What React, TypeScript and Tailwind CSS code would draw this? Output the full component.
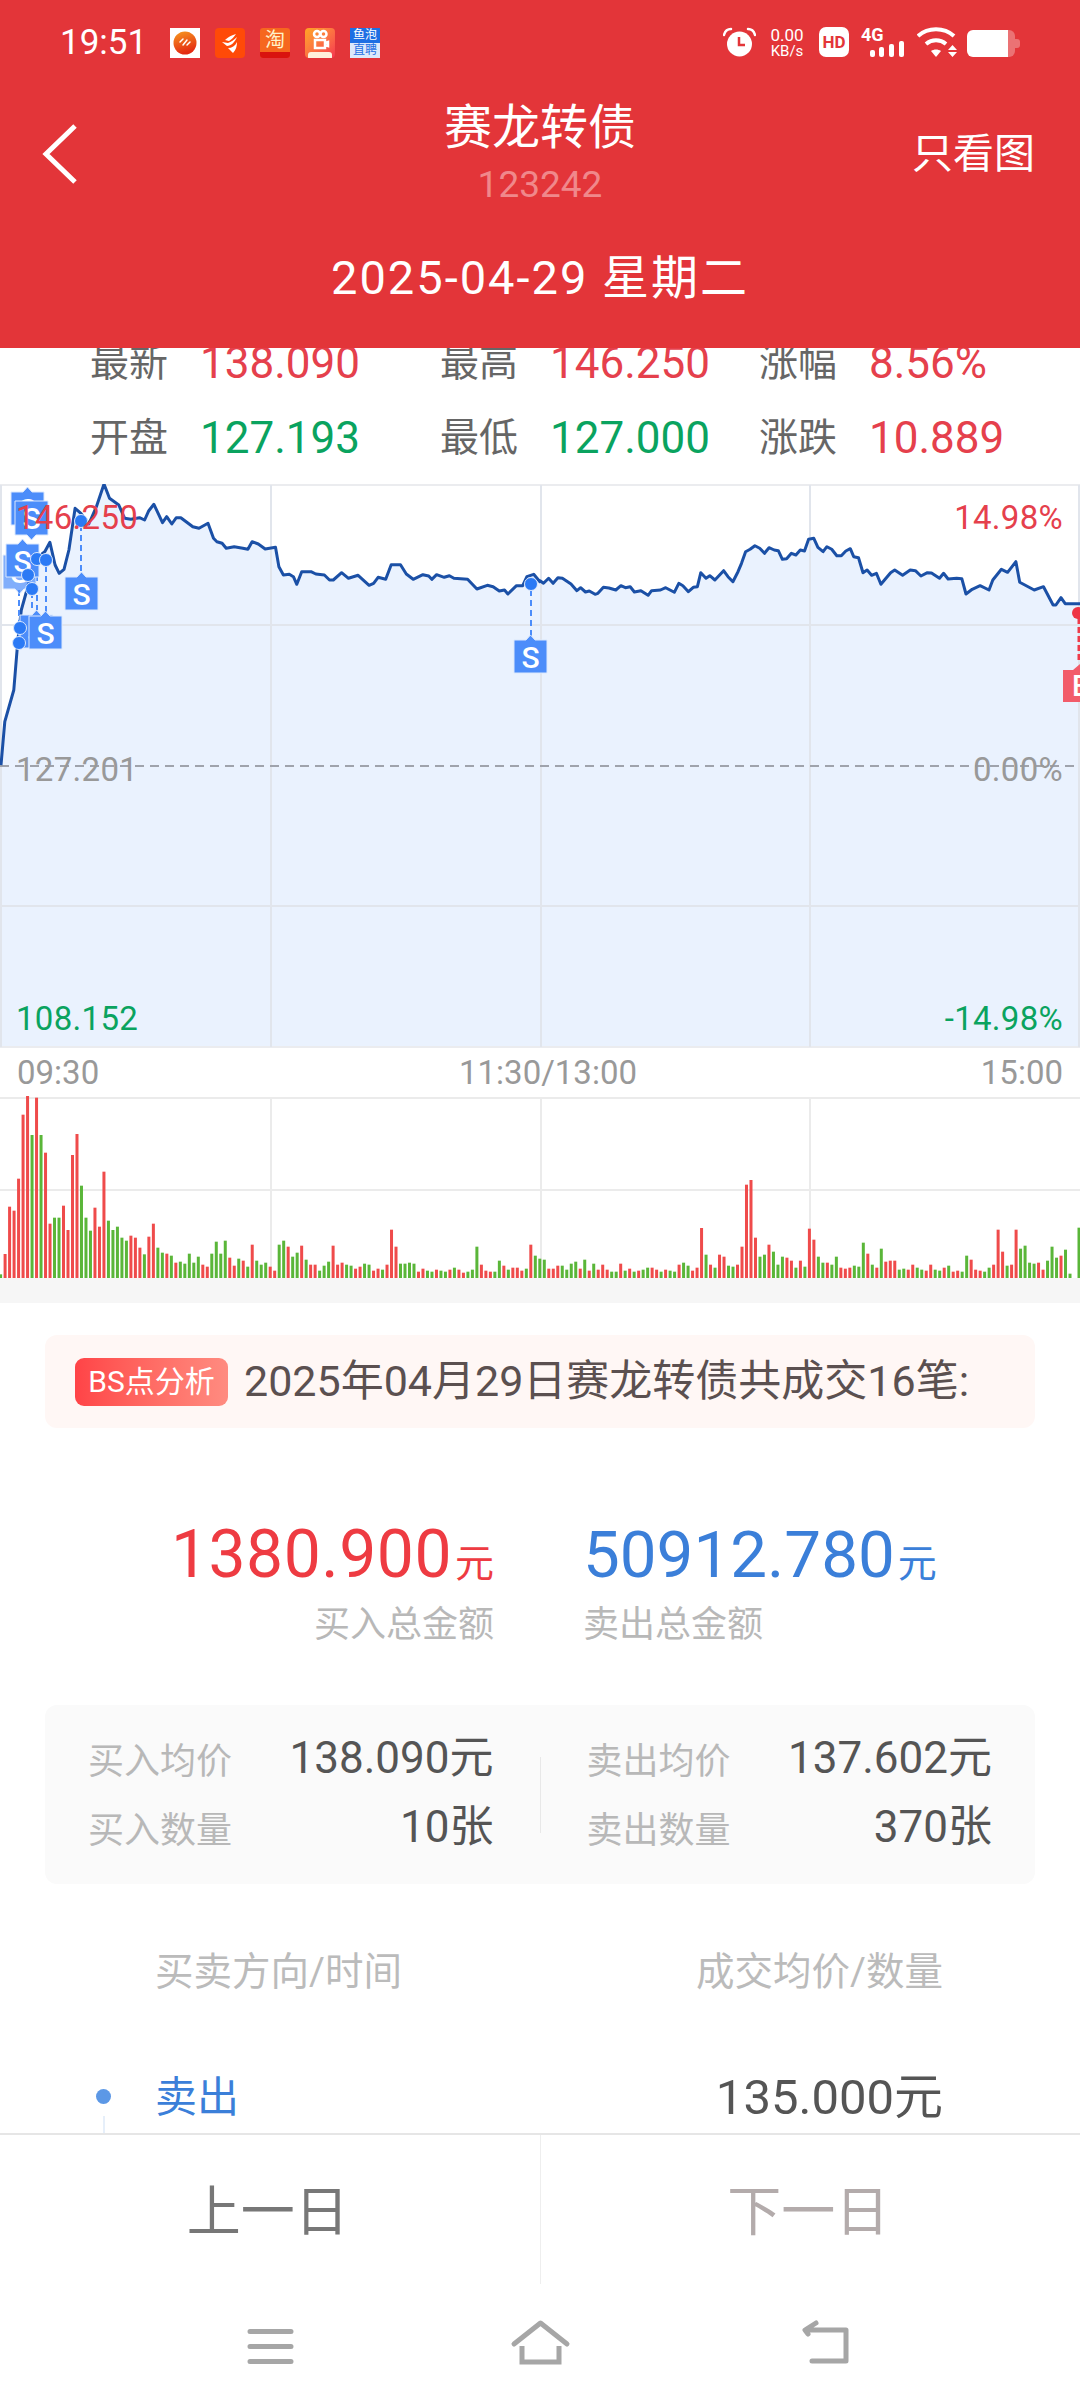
const linePts = [
  [3,885],[14,755],[40,660],[52,510],[62,420],[78,360],[100,270],[130,245],[145,217],[160,285],[172,310],[186,298],[200,240],[218,115],[235,130],[258,162],[280,110],[302,42],[318,85],[345,105],[362,145],[380,148],[405,143],[420,150],[432,122],[447,103],[472,158],[484,140],[499,162],[512,143],[525,143],[560,170],[578,175],[604,160],[620,205],[630,215],[645,220],[657,235],[680,230],[705,235],[720,238],[732,215],[750,222],[770,237],[800,232],[810,290],[823,315],[840,313],[852,320],[862,343],[876,305],[903,305],[917,312],[942,315],[957,330],[968,330],[992,308],[1012,325],[1040,316],[1072,346],[1085,340],[1098,322],[1120,328],[1136,284],[1163,284],[1180,312],[1200,328],[1228,314],[1245,318],[1254,328],[1268,314],[1290,322],[1305,317],[1318,325],[1358,328],[1385,357],[1415,346],[1432,350],[1450,363],[1465,360],[1475,372],[1500,347],[1518,347],[1530,320],[1550,313],[1568,335],
];

// second half of the price line, x measured from the middle of the page
const linePtsRight = [
  [0,332],[10,340],[25,325],[38,340],[52,323],[65,325],[90,342],[107,362],[118,353],[132,366],[143,363],[160,373],[168,370],[184,352],[200,354],[220,360],[235,347],[248,353],[262,350],[274,366],[293,362],[314,376],[324,362],[350,360],[365,353],[390,367],[403,340],[415,347],[431,365],[445,352],[457,350],[467,308],[482,325],[493,317],[508,330],[533,302],[546,320],[560,335],[575,305],[585,280],[597,245],[610,238],[624,227],[638,235],[652,250],[665,233],[680,240],[692,242],[704,268],[716,266],[730,250],[743,255],[756,240],[768,243],[780,208],[795,205],[807,232],[822,245],[833,230],[847,238],[862,257],[875,257],[888,243],[901,236],[911,260],[925,263],[938,308],[950,300],[963,316],[977,310],[990,343],[1018,308],[1030,300],[1053,316],[1075,300],[1090,302],[1106,318],[1125,308],[1137,309],[1160,325],[1172,310],[1185,327],[1210,325],[1225,326],[1237,372],[1255,358],[1278,347],[1304,360],[1315,330],[1340,298],[1358,307],[1382,275],[1393,337],[1435,360],[1462,350],[1490,405],[1498,405],[1513,383],[1525,401],[1568,401],
];

// volume bars: bar top, positive is red, negative is green, 0 is an empty slot
const bars = [
  -703,642,500,512,416,224,168,-285,173,-285,338,551,-533,-533,497,570,345,282,-437,-533,-572,503,560,395,-542,-570,-560,-593,-602,587,593,623,-643,590,551,-623,-638,641,-647,668,-665,-671,-641,-668,-650,674,680,-641,-605,-641,-602,653,677,-656,662,-680,614,-662,-674,-668,680,692,-614,-602,620,-650,-638,617,-659,674,674,-692,-677,-665,617,674,668,-674,-677,686,680,-671,-674,692,686,-689,674,569,620,-671,-671,-668,-671,695,686,-692,-695,689,-692,-695,689,-683,689,698,-695,-689,-620,674,692,695,-695,-662,677,-689,683,683,692,-686,614,-647,-656,
  -659,686,686,677,-677,-689,-671,-665,686,-659,692,-671,689,674,689,-695,-695,671,-692,686,-695,692,-689,-683,683,689,-695,689,-692,-695,674,-668,-677,692,683,564,-644,674,-683,644,650,-677,-680,674,620,434,420,593,-650,-644,614,-635,-674,-650,653,662,-683,662,-680,566,599,-650,-668,668,-674,-650,683,686,683,-677,-680,-608,641,-674,683,-626,665,662,662,-689,-686,689,674,-683,-689,692,674,-689,-692,683,-677,695,692,-695,-647,659,689,692,-695,-683,674,569,635,-677,674,569,-626,-617,-668,-671,668,689,-662,-620,-653,647,-629,-701,0,-563,
];

const toPoint = ([x, y]: number[]) => [x / 2.904, 470 + y / 3];
const pricePoints = [
  ...linePts.map(toPoint),
  ...linePtsRight.map(([x, y]) => toPoint([x + 1568.2, y])),
];
const pricePath = pricePoints.map(([x, y]) => `${x.toFixed(1)},${y.toFixed(1)}`).join(" ");

function Marker({ x, y, down, faded }: { x: number; y: number; down?: boolean; faded?: boolean }) {
  const shape = down
    ? `M${x} ${y}h33v34h-12l-4.500 5-4.500-5h-12z`
    : `M${x} ${y + 5}h12l4.500-5 4.500 5h12v33h-33z`;
  return (
    <g opacity={faded ? 0.7 : 1}>
      <path d={shape} fill="#4c8dfa" stroke="#dbe8fd" strokeWidth="1" />
      <text
        x={x + 16.5}
        y={down ? y + 28 : y + 33}
        textAnchor="middle"
        fontSize="30"
        fontWeight="500"
        fill="#fff"
      >
        S
      </text>
    </g>
  );
}

function Dot({ x, y }: { x: number; y: number }) {
  return <circle cx={x} cy={y} r="6.500" fill="#2b7af5" stroke="#dbe8fd" strokeWidth="1" />;
}

function PriceChart() {
  return (
    <div className="relative h-[564px] shrink-0">
      <svg viewBox="0 484 1080 564" className="block h-[564px] w-[1080px] overflow-hidden">
        <polygon points={`1,1047 ${pricePath} 1080,1047`} fill="#eaf2fe" />
        <g stroke="#e1e5ec" strokeWidth="2" fill="none">
          <path d="M0 485H1080M0 1047H1080" stroke="#ebecef" />
          <path d="M1 485V1047M1079 485V1047M271 485V1047M541 485V1047M810 485V1047M0 625H1080M0 906H1080" />
        </g>
        <path d="M0 766H1080" stroke="#9fa3ac" strokeWidth="2" strokeDasharray="9 6" />
        <polyline points={pricePath} fill="none" stroke="#1b50a6" strokeWidth="3" strokeLinejoin="round" />
        <g stroke="#4c8dfa" strokeWidth="2" strokeDasharray="6 4" fill="none">
          <path d="M81 525V574M46 566V612M37 565V610M32 592V612M19 590V640M531 590V636" />
        </g>
        <path d="M1079 618V662" stroke="#ef3b4a" strokeWidth="3" strokeDasharray="6 3" />
        <Marker x={11} y={487} />
        <Marker x={15} y={501} down />
        <Marker x={3} y={555} down faded />
        <Marker x={6} y={539} />
        <Marker x={20} y={610} />
        <Dot x={20} y={628} />
        <Dot x={19} y={643} />
        <Marker x={29} y={611} />
        <Dot x={37} y={559} />
        <Dot x={46} y={560} />
        <Dot x={28} y={575} />
        <Dot x={32} y={589} />
        <Marker x={65} y={572} />
        <Dot x={81} y={521} />
        <Marker x={514} y={635} />
        <Dot x={531} y={584} />
        <circle cx="1078" cy="613" r="6" fill="#ef3545" />
        <path d="M1063 670h10l7-6v38h-17z" fill="#f25c6a" />
        <text x="1072" y="696" fontSize="29" fontWeight="500" fill="#fff">
          B
        </text>
      </svg>
      <span className="absolute left-[16px] top-[15px] text-[33px] leading-[38px] tracking-[0.3px] text-[#e5404c]">146.250</span>
      <span className="absolute right-[17px] top-[15px] text-[33px] leading-[38px] tracking-[0.3px] text-[#e5404c]">14.98%</span>
      <span className="absolute left-[16px] top-[267px] text-[33px] leading-[38px] tracking-[0.3px] text-[#999]">127.201</span>
      <span className="absolute right-[17px] top-[267px] text-[33px] leading-[38px] tracking-[0.3px] text-[#999]">0.00%</span>
      <span className="absolute left-[16px] top-[516px] text-[33px] leading-[38px] tracking-[0.3px] text-[#0aa35f]">108.152</span>
      <span className="absolute right-[17px] top-[516px] text-[33px] leading-[38px] tracking-[0.3px] text-[#0aa35f]">-14.98%</span>
    </div>
  );
}

function VolumeChart() {
  const pitch = (1079 - 0.6) / (bars.length - 1);
  return (
    <svg viewBox="0 0 1080 181" className="block h-[181px] w-[1080px] shrink-0 overflow-visible">
      <path d="M0 1H1080M0 93H1080M271 1V181M541 1V181M810 1V181" stroke="#ebebeb" strokeWidth="2" fill="none" />
      {bars.map((v, i) => {
        if (v === 0) return null;
        const top = Math.abs(v) / 3 - 57;
        return (
          <rect
            key={i}
            x={0.6 + i * pitch - 1.5}
            y={top}
            width="3"
            height={181 - top}
            fill={v > 0 ? "#ef4b4b" : "#5ab639"}
          />
        );
      })}
    </svg>
  );
}

function NotifyIcons() {
  return (
    <div className="flex gap-[15px]">
      <div className="flex h-[30px] w-[30px] items-center justify-center bg-white">
        <svg width="24" height="24" viewBox="0 0 24 24">
          <defs>
            <linearGradient id="ball" x1="0" y1="0" x2="0.300" y2="1">
              <stop offset="0" stopColor="#f79a1f" />
              <stop offset="1" stopColor="#e42a12" />
            </linearGradient>
          </defs>
          <circle cx="12" cy="12" r="11.500" fill="url(#ball)" />
          <path d="M7 11l3-3M10 14l4-5M14 14l3-3" stroke="#fff" strokeWidth="1.500" strokeLinecap="round" />
        </svg>
      </div>
      <div className="flex h-[30px] w-[30px] items-center justify-center rounded-[4px] bg-[#ff4a08]">
        <svg width="24" height="24" viewBox="0 0 24 24" fill="#fff">
          <path d="M18 3c-4 1-8 3-11 6l4 1c3-2 5-4 7-7zM19 6c-3 3-6 5-9 6l-6-1 5 4c4 0 8-4 10-9zM19 11c-2 4-5 6-9 6l5 5c3-3 4-7 4-11z" />
        </svg>
      </div>
      <div className="flex h-[30px] w-[30px] flex-col overflow-hidden rounded-[3px] bg-[#f6671f]">
        <span className="flex h-[24px] items-center justify-center text-[20px] leading-none text-[#fff2c9]">淘</span>
        <span className="h-[6px] bg-[#d9130f]" />
      </div>
      <div className="flex h-[30px] w-[30px] flex-col items-center overflow-hidden rounded-[4px] bg-gradient-to-br from-[#ffa51f] to-[#f5314f]">
        <svg width="20" height="22" viewBox="0 0 20 22" fill="none" stroke="#fff" strokeWidth="2.500">
          <circle cx="7" cy="6" r="3" />
          <circle cx="13.500" cy="6" r="3" />
          <path d="M5 12h10v8H5zM15 15l3-1v4l-3-1" />
        </svg>
        <span className="mt-auto h-[6px] w-[24px] rounded-t-[3px] bg-[#fff1dc]" />
      </div>
      <div className="flex h-[30px] w-[30px] flex-col overflow-hidden">
        <span className="flex h-[15px] items-center justify-center bg-[#1e6fe3] text-[12px] leading-none text-white">鱼泡</span>
        <span className="flex h-[15px] items-center justify-center bg-[#dce9fb] text-[12px] leading-none text-[#1e6fe3]">直聘</span>
      </div>
    </div>
  );
}

function StatusRight() {
  return (
    <div className="flex items-start text-white">
      <svg width="33" height="30" viewBox="0 0 33 30" className="mr-[12px]">
        <circle cx="16.500" cy="17" r="12.500" fill="#fff" />
        <path d="M16 10v8h6" fill="none" stroke="#e33539" strokeWidth="2.500" />
        <path d="M1 8c1-4 4-6 7-6M32 8c-1-4-4-6-7-6" fill="none" stroke="#fff" strokeWidth="2.500" strokeLinecap="round" />
      </svg>
      <div className="mr-[13px] flex w-[38px] flex-col items-center">
        <span className="text-[17px] leading-[16px]">0.00</span>
        <span className="mt-[1px] text-[15px] leading-[14px]">KB/s</span>
      </div>
      <div className="mr-[12px] flex h-[30px] w-[30px] items-center justify-center rounded-[7px] bg-white text-[17px] font-bold leading-none text-[#e33539]">
        HD
      </div>
      <div className="relative mr-[13px] h-[30px] w-[43px]">
        <span className="absolute left-0 top-0 text-[18px] font-bold leading-[16px]">4G</span>
        <svg width="43" height="30" viewBox="0 0 43 30" fill="#fff" className="absolute left-0 top-0">
          <rect x="9" y="23" width="5" height="7" rx="2" />
          <rect x="18" y="20" width="5" height="10" rx="2" />
          <rect x="28" y="17" width="5" height="13" rx="2" />
          <rect x="38" y="14" width="5" height="16" rx="2" />
        </svg>
      </div>
      <svg width="40" height="30" viewBox="0 0 40 30" className="mr-[10px]">
        <path d="M1 9c10-9 26-9 36 0" fill="none" stroke="#fff" strokeWidth="4" />
        <path d="M9 17c6-5 14-5 20 0" fill="none" stroke="#fff" strokeWidth="4" />
        <path d="M14 24c3-2 7-2 10 0l-5 6z" fill="#fff" />
        <path d="M31 23l4.500-5 4.500 5zM31 25h9l-4.500 5z" fill="#fff" />
      </svg>
      <div className="mt-[3px] flex items-center">
        <div className="flex h-[27px] w-[48px] overflow-hidden rounded-[6px]">
          <div className="w-[41px] bg-white" />
          <div className="flex-1 bg-white/30" />
        </div>
        <div className="h-[9px] w-[5px] rounded-r-[3px] bg-white/30" />
      </div>
    </div>
  );
}

function Header() {
  return (
    <header className="relative z-10 flex h-[348px] shrink-0 flex-col bg-[#e33539] text-white">
      <div className="flex justify-between pl-[60px] pr-[60px] pt-[27px]">
        <div className="flex items-center">
          <span className="mr-[24px] w-[86px] text-[35px] leading-[30px]">19:51</span>
          <NotifyIcons />
        </div>
        <StatusRight />
      </div>
      <div className="mt-[46px] grid grid-cols-[1fr_auto_1fr]">
        <svg width="36" height="60" viewBox="0 0 36 60" className="ml-[42px] self-center">
          <path d="M33 2L4 30l29 28" fill="none" stroke="#fff" strokeWidth="5" />
        </svg>
        <div className="flex flex-col items-center">
          <span className="text-[48px] leading-[48px]">赛龙转债</span>
          <span className="mt-[15px] text-[37px] leading-[36px] text-[#f0888b]">123242</span>
        </div>
        <span className="mr-[45px] self-center justify-self-end text-[41px] leading-[44px]">只看图</span>
      </div>
      <div className="mt-[50px] text-center text-[47px] leading-[50px] tracking-[2px]">2025-04-29 星期二</div>
    </header>
  );
}

const quoteRows = [
  [
    { label: "最新", value: "138.090", color: "text-[#e5404c]" },
    { label: "最高", value: "146.250", color: "text-[#e5404c]" },
    { label: "涨幅", value: "8.56%", color: "text-[#e5404c]" },
  ],
  [
    { label: "开盘", value: "127.193", color: "text-[#0aa35f]" },
    { label: "最低", value: "127.000", color: "text-[#0aa35f]" },
    { label: "涨跌", value: "10.889", color: "text-[#e5404c]" },
  ],
];

function Quotes() {
  return (
    <div className="h-[136px] shrink-0">
      <div className="-mt-[10px] flex flex-col gap-[25px] pl-[90px]">
        {quoteRows.map((row, r) => (
          <div key={r} className="flex h-[50px] items-center">
            {row.map((cell, c) => (
              <div key={cell.label} className={`flex items-center ${c === 0 ? "w-[350px]" : "w-[319px]"}`}>
                <span className="w-[110px] text-[39px] leading-[50px] text-[#666]">{cell.label}</span>
                <span className={`text-[44px] leading-[50px] ${cell.color}`}>{cell.value}</span>
              </div>
            ))}
          </div>
        ))}
      </div>
    </div>
  );
}

function TimeAxis() {
  return (
    <div className="flex h-[49px] shrink-0 items-center justify-between px-[17px] text-[33px] leading-none text-[#999]">
      <span>09:30</span>
      <span className="ml-[16px]">11:30/13:00</span>
      <span>15:00</span>
    </div>
  );
}

function Banner() {
  return (
    <div className="mx-[45px] mt-[32px] flex h-[93px] items-center rounded-[12px] bg-[#fff7f5] pl-[30px]">
      <span className="flex h-[48px] w-[153px] items-center justify-center rounded-[9px] bg-gradient-to-r from-[#ff4347] to-[#ff8b80] text-[30px] leading-none text-white">
        BS点分析
      </span>
      <span className="ml-[16px] whitespace-nowrap text-[43px] leading-none text-[#5b5050]">
        2025年04月29日赛龙转债共成交16笔:
      </span>
    </div>
  );
}

function Totals() {
  return (
    <div className="mt-[95px] flex">
      <div className="flex w-[494px] flex-col items-end">
        <div className="flex items-baseline text-[#ee3b42]">
          <span className="text-[66px] leading-[64px] tracking-[0.5px]">1380.900</span>
          <span className="ml-[3px] text-[39px] leading-[64px]">元</span>
        </div>
        <span className="mt-[9px] text-[36px] leading-[40px] text-[#b8b8b8]">买入总金额</span>
      </div>
      <div className="ml-[89px] flex flex-col items-start">
        <div className="flex items-baseline text-[#3b7fd9]">
          <span className="text-[65.5px] leading-[64px]">50912.780</span>
          <span className="ml-[3px] text-[39px] leading-[64px]">元</span>
        </div>
        <span className="mt-[9px] text-[36px] leading-[40px] text-[#b8b8b8]">卖出总金额</span>
      </div>
    </div>
  );
}

function SummaryColumn({ rows }: { rows: string[][] }) {
  return (
    <div className="flex flex-1 flex-col gap-[25px]">
      {rows.map(([label, value]) => (
        <div key={label} className="flex h-[44px] items-center justify-between">
          <span className="text-[36px] leading-none text-[#b8b8b8]">{label}</span>
          <span className="-mt-[8px] text-[44px] leading-none text-[#555]">{value}</span>
        </div>
      ))}
    </div>
  );
}

function SummaryCard() {
  return (
    <div className="mx-[45px] mt-[60px] flex h-[179px] items-start rounded-[12px] bg-[#fafafa] px-[43px] pt-[35px]">
      <SummaryColumn
        rows={[
          ["买入均价", "138.090元"],
          ["买入数量", "10张"],
        ]}
      />
      <div className="mx-[46px] mt-[17px] h-[76px] w-px bg-[#e8e8e8]" />
      <SummaryColumn
        rows={[
          ["卖出均价", "137.602元"],
          ["卖出数量", "370张"],
        ]}
      />
    </div>
  );
}

function TradeTable() {
  return (
    <div className="relative flex-1 overflow-hidden pl-[155px] pr-[137px]">
      <div className="mt-[66px] flex items-center justify-between text-[38.5px] leading-[44px] text-[#bbb]">
        <span>买卖方向/时间</span>
        <span>成交均价/数量</span>
      </div>
      <div className="mt-[79px] flex items-center justify-between">
        <span className="text-[42px] leading-[50px] text-[#3b7fd9]">卖出</span>
        <span className="text-[49px] leading-[50px] text-[#555]">135.000元</span>
      </div>
      <span className="absolute left-[96px] top-[205px] h-[15px] w-[15px] rounded-full bg-[#5c98e6]" />
      <span className="absolute left-[103px] top-[232px] h-[18px] w-[2px] bg-[#e6effa]" />
    </div>
  );
}

function BottomBar() {
  return (
    <div className="h-[275px] shrink-0 border-t-2 border-[#e6e6e6] bg-white">
      <div className="flex h-[149px]">
        <div className="flex flex-1 items-center justify-center pr-[4px] pt-[6px] text-[54px] leading-none text-[#777]">上一日</div>
        <div className="w-px bg-[#eeeeee]" />
        <div className="flex flex-1 items-center justify-center pr-[4px] pt-[6px] text-[54px] leading-none text-[#b3abab]">下一日</div>
      </div>
      <div className="relative h-[124px]">
        <svg viewBox="0 2283 1080 124" className="block h-[124px] w-[1080px]" fill="none" stroke="#a6a6a6" strokeWidth="5">
          <path d="M250 2330.500H291M250 2345.500H291M250 2360.500H291" strokeLinecap="round" />
          <path d="M514 2343L540.500 2322L567 2343" strokeLinecap="round" strokeLinejoin="round" />
          <path d="M522 2345V2361H559V2345" />
          <path d="M816 2322L805 2329L808 2333M807 2329H846V2360H812" strokeLinecap="round" strokeLinejoin="round" />
        </svg>
      </div>
    </div>
  );
}

export default function App() {
  return (
    <div className="flex h-[2408px] w-[1080px] flex-col overflow-hidden bg-white [font-family:Roboto,'Noto_Sans_CJK_SC',sans-serif]">
      <Header />
      <Quotes />
      <PriceChart />
      <TimeAxis />
      <VolumeChart />
      <div className="h-[25px] shrink-0 bg-[#f6f6f6]" />
      <Banner />
      <Totals />
      <SummaryCard />
      <TradeTable />
      <BottomBar />
    </div>
  );
}
